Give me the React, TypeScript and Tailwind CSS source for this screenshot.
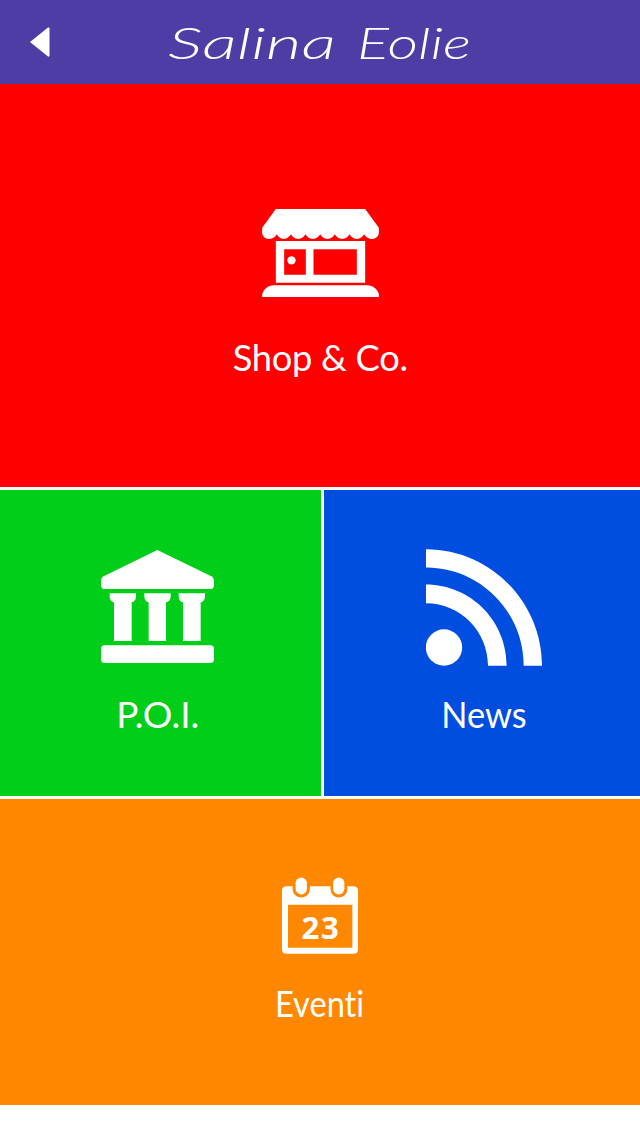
import type { ReactNode } from 'react';

function Wordmark() {
  return (
    <svg
      width="320"
      height="60"
      viewBox="0 0 320 60"
      fill="currentColor"
      className="font-['Lato',sans-serif] text-[43px] font-light italic"
    >
      <text x="8" y="47" textLength="168" lengthAdjust="spacingAndGlyphs">
        Salina
      </text>
      <text x="197" y="47" textLength="114" lengthAdjust="spacingAndGlyphs">
        Eolie
      </text>
    </svg>
  );
}

function ShopIcon() {
  return (
    <svg width="117" height="88" viewBox="0 0 350 264" fill="currentColor">
      <path d="M41 0H309L350 56V71C350 82 340 90 328 90C318 90 310 84 306 76C302 84 294 90 284 90C274 90 266 84 262 76C258 84 250 90 240 90C230 90 222 84 218 76C214 84 206 90 196 90C186 90 178 84 174 76C170 84 162 90 152 90C142 90 134 84 130 76C126 84 118 90 108 90C98 90 90 84 86 76C82 84 74 90 65 90C55 90 48 84 44 76C40 84 32 90 22 90C10 90 0 82 0 71V56Z" />
      <path
        fillRule="evenodd"
        d="M41 96H309V221H41ZM66 121V197H131V121ZM154 121V197H284V121Z"
      />
      <circle cx="88" cy="154" r="12.5" />
      <path d="M0 264V256C4 242 17 229 35 229H315C333 229 346 242 350 256V264Z" />
    </svg>
  );
}

function TempleIcon() {
  return (
    <svg width="113" height="113" viewBox="0 0 339 339" fill="currentColor">
      <path d="M169 0L331 79Q339 83 339 92V106Q339 117 328 117H11Q0 117 0 106V92Q0 83 8 79Z" />
      <path d="M26 130H105V140Q104 154 92 157V273H39V157Q27 154 26 140Z" />
      <path d="M130 130H209V140Q208 154 195 157V273H143V157Q131 154 130 140Z" />
      <path d="M233 130H312V140Q311 154 299 157V273H246V157Q234 154 233 140Z" />
      <rect y="286" width="339" height="53" rx="11" />
    </svg>
  );
}

function FeedIcon() {
  return (
    <svg width="116" height="117" viewBox="0 0 348 350" fill="currentColor">
      <path d="M0 0C192 0 348 157 348 350H293C293 187 162 55 0 55Z" />
      <path d="M0 106C134 106 242 215 242 350H186C186 246 103 162 0 162Z" />
      <circle cx="54" cy="295" r="54.5" />
    </svg>
  );
}

function CalendarIcon() {
  return (
    <svg width="76" height="77" viewBox="0 0 229 231" fill="currentColor">
      <path
        fillRule="evenodd"
        d="M14 27H32V34C32 50 43 61 58 61C73 61 84 50 84 34V27H146V34C146 50 157 61 171 61C186 61 197 50 197 34V27H215Q229 27 229 41V217Q229 231 215 231H14Q0 231 0 217V41Q0 27 14 27ZM18 83V213H212V83Z"
      />
      <rect x="41" y="1" width="34" height="51" rx="17" />
      <rect x="154" y="1" width="34" height="51" rx="17" />
      <text
        x="115"
        y="187"
        textAnchor="middle"
        textLength="112"
        className="font-['Open_Sans',sans-serif] text-[94px] font-bold"
      >
        23
      </text>
    </svg>
  );
}

function Tile({ className, children }: { className: string; children: ReactNode }) {
  return (
    <section className={`flex flex-col items-center text-[37px] leading-[44px] ${className}`}>
      {children}
    </section>
  );
}

export default function App() {
  return (
    <div className="flex h-[1136px] w-[640px] flex-col overflow-hidden bg-white font-['Lato',sans-serif] text-white">
      <header className="flex h-[84px] shrink-0 items-center bg-[#4e3da4]">
        <button aria-label="Back" className="ml-[30px] w-5">
          <svg width="20" height="30" viewBox="0 0 20 30" fill="currentColor">
            <path d="M0 15L18 0.5Q19.500 0 19.500 1.500V28.500Q19.500 30 18 29.500Z" />
          </svg>
        </button>
        <h1 className="ml-[110px]">
          <Wordmark />
        </h1>
      </header>

      <main className="flex flex-col gap-[3px]">
        <Tile className="h-[403px] bg-[#ff0000] pt-[125px]">
          <ShopIcon />
          <h2 className="mt-[38px] scale-x-[0.98] tracking-[-0.3px]">Shop &amp; Co.</h2>
        </Tile>

        <div className="flex gap-[3px]">
          <Tile className="h-[306px] w-[320.5px] bg-[#00ce18] pt-[60px] pr-[5px]">
            <TempleIcon />
            <h2 className="mt-[29px]">P.O.I.</h2>
          </Tile>
          <Tile className="h-[306px] flex-1 bg-[#004ee0] pt-[59px] pl-[5px]">
            <FeedIcon />
            <h2 className="mt-[26px] scale-x-[0.93]">News</h2>
          </Tile>
        </div>

        <Tile className="h-[306px] bg-[#ff8800] pt-[78px]">
          <CalendarIcon />
          <h2 className="mt-[27px] scale-x-[0.88] [font-variant-ligatures:none]">Eventi</h2>
        </Tile>
      </main>
    </div>
  );
}
